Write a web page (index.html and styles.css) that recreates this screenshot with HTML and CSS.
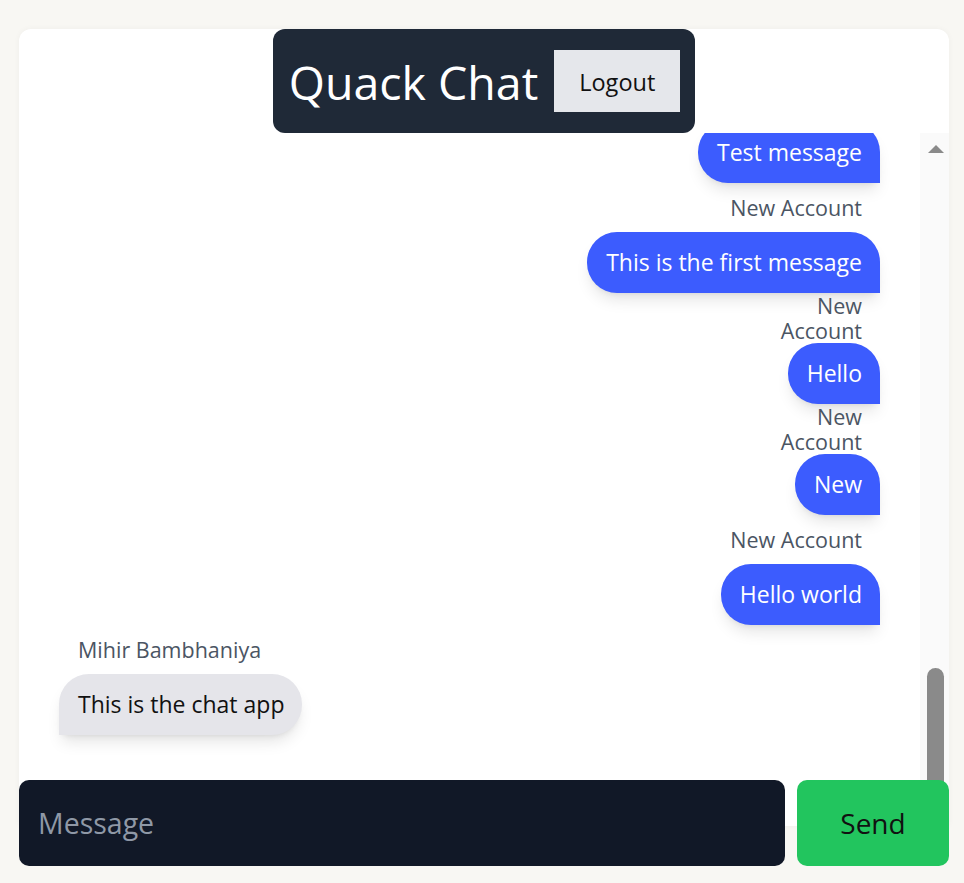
FILE: index.html
```html
<!DOCTYPE html>
<html lang="en">
<head>
<meta charset="utf-8">
<title>Quack Chat</title>
<link rel="stylesheet" href="styles.css">
</head>
<body>
<main class="card">
  <header class="topbar">
    <h1 class="title">Quack Chat</h1>
    <button class="logout" type="button">Logout</button>
  </header>
  <section class="chat">
    <div class="messages">
      <div class="msg msg-out">
        <div class="bubble">Test message</div>
      </div>
      <div class="msg msg-out">
        <div class="name">New Account</div>
        <div class="bubble">This is the first message</div>
      </div>
      <div class="msg msg-out">
        <div class="name">New Account</div>
        <div class="bubble">Hello</div>
      </div>
      <div class="msg msg-out">
        <div class="name">New Account</div>
        <div class="bubble">New</div>
      </div>
      <div class="msg msg-out">
        <div class="name">New Account</div>
        <div class="bubble">Hello world</div>
      </div>
      <div class="msg msg-in">
        <div class="name">Mihir Bambhaniya</div>
        <div class="bubble">This is the chat app</div>
      </div>
    </div>
    <div class="scrollbar" aria-hidden="true">
      <div class="arrow arrow-up"></div>
      <div class="track"><div class="thumb"></div></div>
      <div class="arrow arrow-down"></div>
    </div>
  </section>
</main>
<form class="composer" onsubmit="return false">
  <input class="field" type="text" placeholder="Message">
  <button class="send" type="submit">Send</button>
</form>
</body>
</html>
```
FILE: styles.css
```css
* { box-sizing: border-box; }

html, body { height: 100%; }

body {
  margin: 0;
  padding: 29px 15px 0 19px;
  background: #f8f7f3;
  font-family: "Open Sans", "Noto Sans", sans-serif;
  overflow: hidden;
}

.card {
  height: 797px;
  background: #ffffff;
  border-radius: 12px 12px 0 0;
  box-shadow: 0 0 6px rgba(0, 0, 0, 0.04);
  display: flex;
  flex-direction: column;
  overflow: hidden;
}

.topbar {
  align-self: center;
  flex: none;
  height: 104px;
  display: flex;
  align-items: center;
  gap: 16px;
  padding: 0 15px 0 16px;
  background: #1f2937;
  border-radius: 12px;
}

.title {
  margin: 0;
  color: #ffffff;
  font-size: 46.5px;
  font-weight: 400;
  line-height: 1;
  padding-top: 2px;
}

.logout {
  width: 126px;
  height: 62px;
  border: 0;
  background: #e5e7eb;
  color: #111111;
  font-family: inherit;
  font-size: 23.5px;
  padding: 2px 0 0;
}

.chat {
  flex: 1;
  min-height: 0;
  display: flex;
}

.messages {
  flex: 1;
  min-width: 0;
  display: flex;
  flex-direction: column;
  justify-content: flex-end;
  overflow: hidden;
  padding: 0 40px 91px 40px;
}

.msg {
  display: flex;
  flex-direction: column;
  flex: none;
}

.msg-out { align-self: flex-end; align-items: flex-end; }
.msg-in { align-self: flex-start; align-items: flex-start; }

.name {
  width: 0;
  min-width: 100%;
  min-height: 49px;
  display: flex;
  align-items: center;
  color: #4b5563;
  font-size: 21.5px;
  line-height: 25px;
}

.msg-out .name {
  justify-content: flex-end;
  text-align: right;
  padding-right: 18px;
}

.msg-in .name {
  justify-content: flex-start;
  padding-left: 19px;
}

.bubble {
  font-size: 23px;
  line-height: 31px;
  padding: 15px 18px 15px 19px;
  border-radius: 30px;
  white-space: nowrap;
  box-shadow: 0 10px 15px -3px rgba(0, 0, 0, 0.1), 0 4px 6px -4px rgba(0, 0, 0, 0.1);
}

.msg-out .bubble {
  background: #3c5cfe;
  color: #ffffff;
  border-bottom-right-radius: 0;
}

.msg-in .bubble {
  background: #e5e5ea;
  color: #111111;
  border-bottom-left-radius: 0;
}

.scrollbar {
  flex: none;
  width: 29px;
  background: #fafafa;
  display: flex;
  flex-direction: column;
  align-items: center;
  padding: 12px 0 10px 2px;
}

.arrow {
  width: 0;
  height: 0;
  border-left: 8px solid transparent;
  border-right: 8px solid transparent;
}

.arrow-up { border-bottom: 8px solid #8a8a8a; }
.arrow-down { border-top: 8px solid #8a8a8a; }

.track {
  flex: 1;
  width: 17px;
  display: flex;
  flex-direction: column;
  justify-content: flex-end;
  padding: 0 0 8px;
}

.thumb {
  height: 132px;
  background: #8a8a8a;
  border-radius: 9px;
}

.composer {
  position: fixed;
  left: 19px;
  right: 15px;
  bottom: 17px;
  height: 86px;
  display: flex;
  gap: 12px;
  margin: 0;
}

.field {
  flex: 1;
  min-width: 0;
  border: 0;
  border-radius: 10px;
  background: #111827;
  color: #ffffff;
  font-family: inherit;
  font-size: 28.5px;
  padding: 0 19px;
  outline: none;
}

.field::placeholder { color: #8f98a6; }

.send {
  width: 152px;
  border: 0;
  border-radius: 10px;
  background: #22c55e;
  color: #111111;
  font-family: inherit;
  font-size: 28px;
  padding: 0;
}
```
